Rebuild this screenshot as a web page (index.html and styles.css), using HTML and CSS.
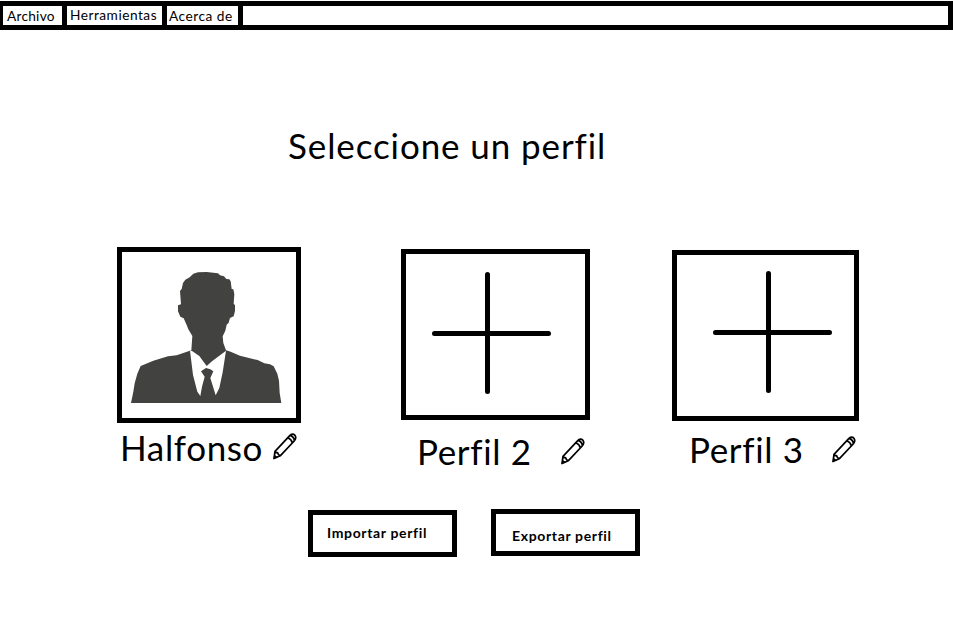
FILE: index.html
```html
<!DOCTYPE html>
<html lang="es">
<head>
<meta charset="utf-8">
<title>Seleccione un perfil</title>
<link rel="stylesheet" href="styles.css">
</head>
<body>
<svg class="defs" aria-hidden="true">
  <symbol id="pencil" viewBox="0 0 24 27">
    <path d="M1 25.5 L2 18.3 L16.500 2.8 Q19.500 -.2 22 2.4 Q23.800 5 21.2 8 L7.2 22.800 Z M2 18.3 Q3 20 4.600 19.7 Q5 22.2 7.2 22.800 M14.800 4.700 Q18.500 6 19.300 9.900 M17 2.4 Q21 3.500 21.4 8" fill="none" stroke="#000" stroke-width="1.7" stroke-linejoin="round"/>
    <path d="M.6 26 L1.200 21.500 L4.800 24.300 Z"/>
  </symbol>
</svg>
<nav class="menu">
  <a class="item archivo">Archivo</a>
  <a class="item herramientas">Herramientas</a>
  <a class="item acerca">Acerca de</a>
  <span class="rest"></span>
</nav>
<main>
  <h1>Seleccione un perfil</h1>
  <section class="profiles">
    <article class="profile first">
      <div class="frame">
        <svg class="art" viewBox="36 36 522 498" fill="#424240">
          <path d="M250 101 L264 97 L290 96 L324 100 L330 106 L342 109 L349 117 L358 118 L362 124 L365 147 L370 148 L373 162 L371 191 L375 196 L375 213 L371 229 L360 234 L356 248 L350 254 L346 272 L338 289 L340 309 L348 331 L362 335 L390 347 L420 355 L443 360 L463 370 L480 373 L491 379 L502 401 L507 422 L509 459 L514 489 L63 489 L70 455 L74 430 L82 401 L92 378 L130 362 L174 349 L200 346 L222 338 L244 331 L247 288 L235 268 L230 255 L221 235 L211 230 L204 214 L204 196 L213 193 L210 153 L215 147 L219 129 L226 119 L239 112 Z"/>
          <path fill="#fff" d="M240 332 L245 332 L268 348 L290 378 L306 364 L348 332 L338 397 L328 444 L317 466 L301 414 L310 394 L301 388 L288 384 L273 394 L284 410 L276 440 L271 468 L262 455 L249 405 Z"/>
        </svg>
      </div>
      <div class="caption"><span class="name">Halfonso</span><svg class="pencil"><use href="#pencil"/></svg></div>
    </article>
    <article class="profile second">
      <div class="frame">
        <svg class="art" viewBox="406 254 179 161"><path class="plus" d="M487.5 274.500V391.500M434.500 333.500H548.500"/></svg>
      </div>
      <div class="caption"><span class="name">Perfil 2</span><svg class="pencil"><use href="#pencil"/></svg></div>
    </article>
    <article class="profile third">
      <div class="frame">
        <svg class="art" viewBox="677 255 177 161"><path class="plus" d="M768.5 273.500V390.500M715.500 332.500H829.500"/></svg>
      </div>
      <div class="caption"><span class="name">Perfil 3</span><svg class="pencil"><use href="#pencil"/></svg></div>
    </article>
  </section>
  <div class="actions">
    <button class="import">Importar perfil</button>
    <button class="export">Exportar perfil</button>
  </div>
</main>
</body>
</html>
```
FILE: styles.css
```css
* { box-sizing: border-box; }
body {
  margin: 0;
  padding-top: 1px;
  height: 623px;
  overflow: hidden;
  background: #fff;
  color: #000;
  font-family: Lato, "Liberation Sans", sans-serif;
}
.defs { display: block; width: 0; height: 0; }
.menu {
  display: flex;
  gap: 5px;
  height: 29px;
  padding: 5px 5px 5px 3px;
  background: #000;
}
.item, .rest { background: #fff; height: 19px; }
.item { font-size: 13.7px; line-height: 20px; white-space: nowrap; }
.archivo { width: 59px; padding-left: 4px; letter-spacing: .25px; }
.herramientas { width: 95px; padding-left: 3px; line-height: 18px; letter-spacing: .5px; }
.acerca { width: 71px; padding-left: 2px; letter-spacing: .5px; }
.rest { flex: 1; }
h1 {
  margin: 95px 0 0 288px;
  font-size: 35px;
  font-weight: 400;
  line-height: 40px;
  letter-spacing: .9px;
  white-space: nowrap;
}
.profiles {
  display: flex;
  height: 263px;
  margin-top: 82px;
  padding-left: 117px;
}
.frame { border: 5px solid #000; }
.art { display: block; width: 100%; height: 100%; }
.plus { fill: none; stroke: #000; stroke-width: 5; stroke-linecap: round; }
.first { width: 184px; }
.first .frame { height: 176px; }
.second { width: 189px; margin: 2px 0 0 100px; }
.third { width: 187px; margin: 3px 0 0 82px; }
.second .frame, .third .frame { height: 171px; }
.caption {
  display: flex;
  justify-content: space-between;
  font-size: 35px;
  line-height: 40px;
  letter-spacing: .65px;
}
.name { white-space: nowrap; }
.pencil { width: 24px; height: 27px; }
.first .caption { padding: 4px 4px 0 3px; }
.first .pencil { margin-top: 6px; }
.second .caption { padding: 11px 5px 0 16px; }
.second .pencil { margin-top: 7px; }
.third .caption { padding: 8px 3px 0 17px; }
.third .pencil { margin-top: 7px; }
.actions { display: flex; gap: 34px; padding-left: 308px; margin-top: -1px; }
button {
  width: 149px;
  height: 47px;
  border: 5px solid #000;
  border-radius: 0;
  background: #fff;
  color: #000;
  font: 700 14px/20px Lato, "Liberation Sans", sans-serif;
  letter-spacing: .65px;
  text-align: left;
  white-space: nowrap;
}
.import { margin-top: 1px; padding: 0 0 2px 14px; }
.export { padding: 6px 0 0 16px; }
```
